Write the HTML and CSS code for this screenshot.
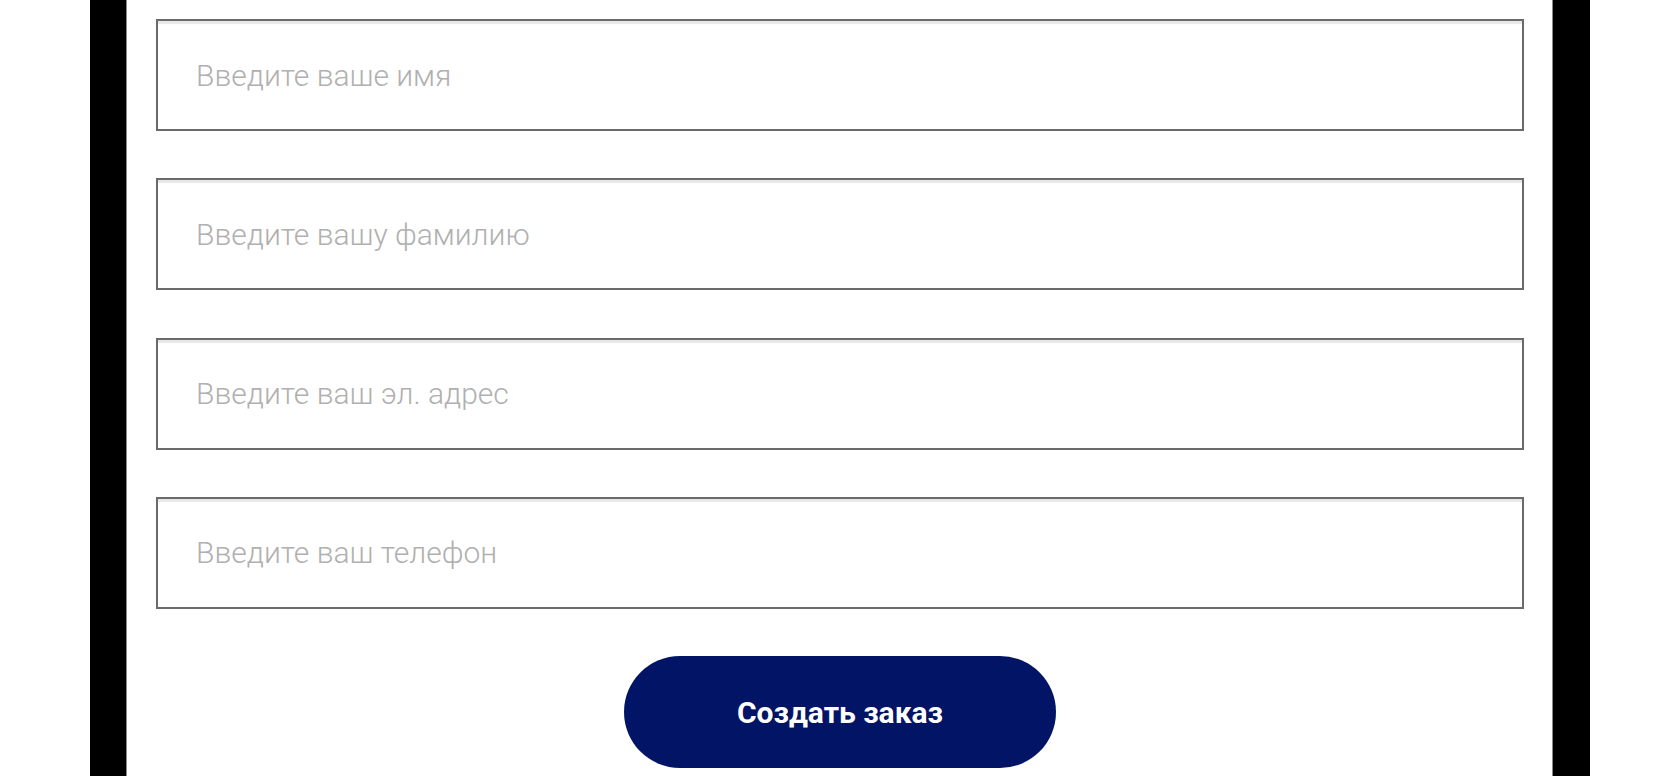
FILE: index.html
```html
<!DOCTYPE html>
<html lang="ru">
<head>
<meta charset="utf-8">
<title>Создать заказ</title>
<link rel="stylesheet" href="styles.css">
</head>
<body>
<div class="page">
  <div class="side"></div>
  <div class="frame frame-left"></div>
  <main class="content">
    <form class="order-form">
      <input class="field" type="text" placeholder="Введите ваше имя">
      <input class="field" type="text" placeholder="Введите вашу фамилию">
      <input class="field" type="email" placeholder="Введите ваш эл. адрес">
      <input class="field" type="tel" placeholder="Введите ваш телефон">
      <div class="actions">
        <button class="submit" type="button">Создать заказ</button>
      </div>
    </form>
  </main>
  <div class="frame frame-right"></div>
  <div class="side"></div>
</div>
</body>
</html>
```

FILE: styles.css
```css
* { box-sizing: border-box; }
html, body { margin: 0; padding: 0; height: 100%; background: #fff; overflow: hidden; }
body { font-family: Roboto, "Noto Sans", sans-serif; }

.page {
  display: flex;
  height: 776px;
}
.side { width: 90px; flex: none; background: #fff; }
.frame { width: 37px; flex: none; background: #000; }
.frame-left { border-right: 1px solid #8a8a8a; }
.frame-right { width: 38px; border-left: 1px solid #8a8a8a; }

.content {
  flex: 1;
  background: #fff;
  padding: 19px 28px 0 29px;
}

.order-form {
  display: flex;
  flex-direction: column;
  gap: 47.3px;
}

.field {
  display: block;
  width: 100%;
  height: 112px;
  border: 2px solid #6a6a6a;
  border-radius: 0;
  box-shadow: inset 0 4px 1px -1px #e8e8e8;
  padding: 0 0 0 38px;
  font-family: Roboto, sans-serif;
  font-weight: 300;
  font-size: 30px;
  color: #333;
  background: #fff;
  outline: none;
}
.field::placeholder { color: #b0b0b0; opacity: 1; }

.actions {
  display: flex;
  justify-content: center;
}

.submit {
  width: 432px;
  height: 112px;
  border: none;
  border-radius: 56px;
  background: #021465;
  color: #fff;
  font-family: Roboto, sans-serif;
  font-weight: 700;
  font-size: 30px;
  cursor: pointer;
}
```
